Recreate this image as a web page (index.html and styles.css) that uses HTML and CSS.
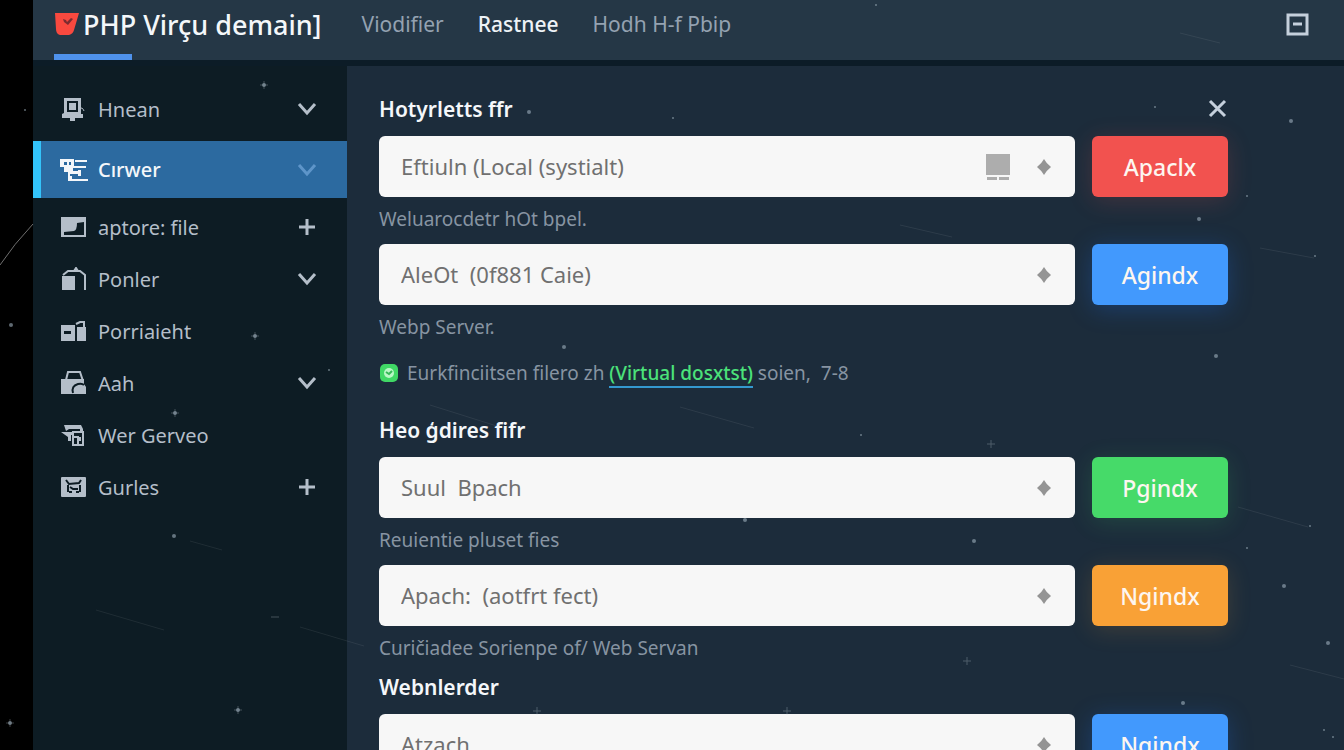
FILE: index.html
```html
<!DOCTYPE html>
<html lang="en">
<head>
    <meta charset="UTF-8">
    <meta name="viewport" content="width=device-width, initial-scale=1.0">
    <title>PHP Virçu demain</title>
    <link rel="stylesheet" href="styles.css">
</head>
<body>
    <div class="app">
        <header class="topbar">
            <a class="brand" href="#">
                <svg class="brand-logo" width="26" height="24" viewBox="0 0 26 24">
                    <path d="M1 1h24l-5 17q-1 4-5 5H6q-4-1-4-6z" fill="#f9493f"/>
                    <path d="M9 7l3 1 1 2 4-4 2 1-5 6-4-3z" fill="#7c2b30"/>
                </svg>
                <span>PHP Virçu demain]</span>
            </a>
            <nav class="topnav">
                <a href="#">Viodifier</a>
                <a href="#" class="current">Rastnee</a>
                <a href="#">Hodh H-f Pbip</a>
            </nav>
            <button type="button" class="icon-button" aria-label="Minimize">
                <svg width="24" height="24" viewBox="0 0 24 24">
                    <rect x="3" y="3" width="19" height="19" fill="none" stroke="#c5d0dc" stroke-width="3"/>
                    <path d="M8 12h9" stroke="#c5d0dc" stroke-width="3"/>
                </svg>
            </button>
        </header>

        <div class="body">
            <aside class="sidebar">
                <a href="#" class="item">
                    <svg class="item-icon" viewBox="0 0 28 24">
                        <path d="M4 1h17v16h2v4H2v-4l2-1z"/>
                        <path d="M10 20h5v4h-5z"/>
                        <path d="M8 5h9v9H8z" fill="none" stroke="#0d1c24" stroke-width="2"/>
                        <path d="M18 11q5-1 6 3" fill="none" stroke="#b4bec9" stroke-width="1"/>
                    </svg>
                    <span>Hnean</span>
                    <svg class="item-mark" viewBox="0 0 20 20"><path d="M2 5l8 9 8-9"/></svg>
                </a>
                <a href="#" class="item active">
                    <svg class="item-icon" viewBox="0 0 28 24">
                        <path d="M0 1h14v7h12v2H13v3h5v3h-6v5h16v2H8v-9H4V9H0z"/>
                        <path d="M15 2h12v2H15zM18 12h3v6h-3z"/>
                        <path d="M4 4h3v3H4zM9 4h2v3H9zM10 16h6v2h-6z" fill="#2c6aa0"/>
                    </svg>
                    <span>Cırwer</span>
                    <svg class="item-mark" viewBox="0 0 20 20"><path d="M2 5l8 9 8-9"/></svg>
                </a>
                <a href="#" class="item">
                    <svg class="item-icon" viewBox="0 0 28 24">
                        <path d="M1 2h25v20H1z"/>
                        <path d="M4 17l10-1q3-1 3-8l7-1v13H4z" fill="#0d1c24"/>
                    </svg>
                    <span>aptore: file</span>
                    <svg class="item-mark" viewBox="0 0 20 20"><path d="M10 2v16M2 10h16"/></svg>
                </a>
                <a href="#" class="item">
                    <svg class="item-icon" viewBox="0 0 28 24">
                        <path d="M2 9h13v14H2z"/>
                        <path d="M3 8l5-4h12l5 4v15M14 4l2-3 2 3" fill="none" stroke="#b4bec9" stroke-width="2"/>
                    </svg>
                    <span>Ponler</span>
                    <svg class="item-mark" viewBox="0 0 20 20"><path d="M2 5l8 9 8-9"/></svg>
                </a>
                <a href="#" class="item">
                    <svg class="item-icon" viewBox="0 0 28 24">
                        <path d="M1 6h14v16H1zM17 8h9v14h-9z"/>
                        <path d="M4 12h7v3H4z" fill="#0d1c24"/>
                        <path d="M16 5l4-2h4v5" fill="none" stroke="#b4bec9" stroke-width="2"/>
                    </svg>
                    <span>Porriaieht</span>
                </a>
                <a href="#" class="item">
                    <svg class="item-icon" viewBox="0 0 28 24">
                        <path d="M1 8h23v5l2 3v7H1z"/>
                        <path d="M6 9l2-8h12l3 9" fill="none" stroke="#b4bec9" stroke-width="2"/>
                        <path d="M13 22q-2-7 5-9 4-1 6 1" fill="none" stroke="#0d1c24" stroke-width="2"/>
                    </svg>
                    <span>Aah</span>
                    <svg class="item-mark" viewBox="0 0 20 20"><path d="M2 5l8 9 8-9"/></svg>
                </a>
                <a href="#" class="item">
                    <svg class="item-icon" viewBox="0 0 28 24">
                        <path d="M4 2h17l2 4v3h-3V6H9l-3 2zM1 9h13v3h-3v6H8v-4z"/>
                        <path d="M13 9h10v13H13zM13 14h5v8" fill="none" stroke="#b4bec9" stroke-width="2"/>
                        <path d="M19 14h2v4h-2z"/>
                    </svg>
                    <span>Wer Gerveo</span>
                </a>
                <a href="#" class="item">
                    <svg class="item-icon" viewBox="0 0 28 24">
                        <rect x="1" y="2" width="25" height="20" rx="1"/>
                        <path d="M6 5l3 4 10-1 2-3M8 10v7M20 10v7M10 12l3 2h5M9 17h3M16 17h3" fill="none" stroke="#0d1c24" stroke-width="2"/>
                    </svg>
                    <span>Gurles</span>
                    <svg class="item-mark" viewBox="0 0 20 20"><path d="M10 2v16M2 10h16"/></svg>
                </a>
            </aside>

            <main class="content">
                <section class="section">
                    <div class="section-head">
                        <h2>Hotyrletts ffr</h2>
                        <button type="button" class="icon-button" aria-label="Close">
                            <svg width="20" height="20" viewBox="0 0 20 20">
                                <path d="M2 2l15 15M17 2L2 17" stroke="#c5d0dc" stroke-width="3"/>
                            </svg>
                        </button>
                    </div>
                    <div class="row">
                        <div class="field">
                            <select id="local" aria-describedby="local-hint" aria-label="Local">
                                <option>Eftiuln (Local (systialt)</option>
                            </select>
                            <span class="field-icons">
                                <svg width="24" height="26" viewBox="0 0 24 26">
                                    <path d="M0 0h24v21H0zM1 23h10v3H1zM13 23h10v3H13z" fill="#adadad"/>
                                </svg>
                                <svg width="16" height="16" viewBox="0 0 16 16"><path d="M8 0q2 4 7 8-5 4-7 8-2-4-7-8 5-4 7-8z"/></svg>
                            </span>
                        </div>
                        <button type="button" class="action red">Apaclx</button>
                    </div>
                    <p class="hint" id="local-hint">Weluarocdetr hOt bpel.</p>
                    <div class="row">
                        <div class="field">
                            <select id="server" aria-describedby="server-hint" aria-label="Server">
                                <option>AleOt&nbsp; (0f881 Caie)</option>
                            </select>
                            <span class="field-icons">
                                <svg width="16" height="16" viewBox="0 0 16 16"><path d="M8 0q2 4 7 8-5 4-7 8-2-4-7-8 5-4 7-8z"/></svg>
                            </span>
                        </div>
                        <button type="button" class="action blue">Agindx</button>
                    </div>
                    <p class="hint" id="server-hint">Webp Server.</p>
                    <p class="status">
                        <svg width="20" height="20" viewBox="0 0 20 20">
                            <rect x="1" y="1" width="18" height="18" rx="5" fill="#40d865"/>
                            <circle cx="10" cy="10" r="5" fill="#b9f7c5"/>
                            <path d="M7 9l3 2 3-3" fill="none" stroke="#35b957" stroke-width="2"/>
                        </svg>
                        <span>Eurkfinciitsen filero zh <a href="#">(Virtual dosxtst)</a> soien,&nbsp; 7-8</span>
                    </p>
                </section>

                <section class="section">
                    <div class="section-head">
                        <h2>Heo ģdires fifr</h2>
                    </div>
                    <div class="row">
                        <div class="field">
                            <select id="bpach" aria-describedby="bpach-hint" aria-label="Bpach">
                                <option>Suul&nbsp; Bpach</option>
                            </select>
                            <span class="field-icons">
                                <svg width="16" height="16" viewBox="0 0 16 16"><path d="M8 0q2 4 7 8-5 4-7 8-2-4-7-8 5-4 7-8z"/></svg>
                            </span>
                        </div>
                        <button type="button" class="action green">Pgindx</button>
                    </div>
                    <p class="hint" id="bpach-hint">Reuientie pluset fies</p>
                    <div class="row">
                        <div class="field">
                            <select id="apach" aria-describedby="apach-hint" aria-label="Apach">
                                <option>Apach:&nbsp; (aotfrt fect)</option>
                            </select>
                            <span class="field-icons">
                                <svg width="16" height="16" viewBox="0 0 16 16"><path d="M8 0q2 4 7 8-5 4-7 8-2-4-7-8 5-4 7-8z"/></svg>
                            </span>
                        </div>
                        <button type="button" class="action orange">Ngindx</button>
                    </div>
                    <p class="hint" id="apach-hint">Curičiadee Sorienpe of/ Web Servan</p>
                </section>

                <section class="section">
                    <div class="section-head">
                        <h2>Webnlerder</h2>
                    </div>
                    <div class="row">
                        <div class="field">
                            <select id="web" aria-label="Webnlerder">
                                <option>Atzach</option>
                            </select>
                            <span class="field-icons">
                                <svg width="16" height="16" viewBox="0 0 16 16"><path d="M8 0q2 4 7 8-5 4-7 8-2-4-7-8 5-4 7-8z"/></svg>
                            </span>
                        </div>
                        <button type="button" class="action blue">Ngindx</button>
                    </div>
                </section>
            </main>
        </div>
    </div>

    <!-- starry background, drawn over the panels -->
    <svg class="stars" viewBox="0 0 1344 750" preserveAspectRatio="xMinYMin slice" aria-hidden="true">
        <path class="trail" d="M0 265Q14 244 33 224"/>
        <g class="streak">
            <path d="M96 610l68 20M300 627l64 19M190 541l32 9M900 225l52 12M430 405l70 22M680 407l74 21M1238 507l70 20M1260 248l54 10M1180 33l40 10M1290 665l54 14"/>
        </g>
        <g class="cross">
            <path d="M260 85h8M264 81v8M251 336h8M255 332v8M171 413h8M175 409v8M234 710h8M238 706v8M6 723h8M10 719v8M271 617h8M963 661h8M967 657v8M533 711h8M537 707v8M783 711h8M787 707v8M987 444h8M991 440v8"/>
        </g>
        <g class="dot">
            <circle cx="264" cy="85" r="2"/>
            <circle cx="255" cy="336" r="2"/>
            <circle cx="175" cy="413" r="2"/>
            <circle cx="238" cy="710" r="2"/>
            <circle cx="10" cy="723" r="2"/>
            <circle cx="11" cy="325" r="2"/>
            <circle cx="25" cy="110" r="1"/>
            <circle cx="174" cy="536" r="2"/>
            <circle cx="529" cy="112" r="2"/>
            <circle cx="673" cy="118" r="1"/>
            <circle cx="564" cy="347" r="2"/>
            <circle cx="745" cy="520" r="2"/>
            <circle cx="974" cy="541" r="2"/>
            <circle cx="1155" cy="107" r="1"/>
            <circle cx="1291" cy="121" r="2"/>
            <circle cx="1199" cy="219" r="2"/>
            <circle cx="1247" cy="196" r="1"/>
            <circle cx="1216" cy="356" r="2"/>
            <circle cx="1315" cy="256" r="1"/>
            <circle cx="861" cy="435" r="1"/>
            <circle cx="1310" cy="526" r="1"/>
            <circle cx="1247" cy="548" r="1"/>
            <circle cx="1284" cy="586" r="2"/>
            <circle cx="1328" cy="643" r="2"/>
            <circle cx="1183" cy="703" r="2"/>
            <circle cx="1324" cy="730" r="1"/>
            <circle cx="1333" cy="737" r="1"/>
            <circle cx="329" cy="370" r="1"/>
            <circle cx="876" cy="5" r="1"/>
        </g>
    </svg>
</body>
</html>
```

FILE: styles.css
```css
* {
    box-sizing: border-box;
}
body {
    margin: 0;
    padding: 0 0 0 33px;
    background-color: #000;
    font-family: "Noto Sans", "Open Sans", sans-serif;
    color: #b4bec9;
}
a {
    color: inherit;
    text-decoration: none;
}
.app {
    display: flex;
    flex-direction: column;
    height: 100vh;
    background-color: #1c2c3b;
}

/* Top bar */
.topbar {
    display: flex;
    align-items: stretch;
    height: 66px;
    flex-shrink: 0;
    padding: 0 35px 0 21px;
    background-color: #253746;
    border-bottom: 6px solid #0c1c27;
}
.brand {
    position: relative;
    display: flex;
    align-items: center;
    gap: 3px;
    padding-bottom: 12px;
    font-size: 27px;
    font-weight: 500;
    color: #f4f7fa;
    white-space: nowrap;
}
.brand::after {
    content: "";
    position: absolute;
    left: 0;
    bottom: 0;
    width: 78px;
    height: 6px;
    background-color: #4f92ec;
}
.topnav {
    display: flex;
    align-items: center;
    gap: 34px;
    margin-left: 40px;
    padding-bottom: 12px;
    font-size: 21px;
    color: #94a2b1;
    white-space: nowrap;
}
.topnav .current {
    color: #eef2f6;
    font-weight: 500;
}
.icon-button {
    display: flex;
    align-items: center;
    padding: 0;
    background: none;
    border: none;
    cursor: pointer;
}
.topbar .icon-button {
    margin-left: auto;
    padding-bottom: 12px;
}

/* Sidebar */
.body {
    display: flex;
    flex: 1;
    min-height: 0;
}
.sidebar {
    width: 314px;
    flex-shrink: 0;
    padding-top: 17px;
    background-color: #0d1c24;
}
.item {
    display: flex;
    align-items: center;
    height: 52px;
    padding: 0 30px 0 27px;
    font-size: 20px;
}
.item-icon {
    width: 28px;
    height: 24px;
    margin-right: 10px;
    fill: #b4bec9;
}
.item-mark {
    width: 20px;
    height: 20px;
    margin-left: auto;
    fill: none;
    stroke: #b4bec9;
    stroke-width: 3;
}
.item.active {
    height: 57px;
    margin: 6px 0 3px;
    padding-left: 19px;
    border-left: 8px solid #33c4fb;
    background-color: #2c6aa0;
    color: #f4f7fa;
    font-weight: 500;
}
.active .item-icon {
    fill: #f4f7fa;
}
.active .item-mark {
    stroke: #5e95c9;
}

/* Content */
.content {
    display: flex;
    flex-direction: column;
    gap: 10px;
    flex: 1;
    min-width: 0;
    padding: 27px 116px 27px 32px;
    overflow-y: auto;
    scrollbar-width: none;
}
.section-head {
    display: flex;
    align-items: center;
    justify-content: space-between;
    height: 32px;
    margin-bottom: 11px;
}
h2 {
    margin: 0;
    font-size: 21px;
    font-weight: 600;
    line-height: 32px;
    color: #f4f7fa;
}
.row {
    display: flex;
    gap: 17px;
}
.field {
    position: relative;
    flex: 1;
}
select {
    width: 100%;
    height: 61px;
    padding: 0 22px 2px;
    appearance: none;
    background-color: #f7f7f7;
    border: none;
    border-radius: 6px;
    font-family: inherit;
    font-size: 22px;
    color: #707070;
}
.field-icons {
    position: absolute;
    top: 0;
    right: 23px;
    display: flex;
    align-items: center;
    gap: 26px;
    height: 100%;
    fill: #949494;
    pointer-events: none;
}
.action {
    width: 136px;
    height: 61px;
    padding: 0;
    border: none;
    border-radius: 6px;
    font-family: inherit;
    font-size: 23px;
    font-weight: 500;
    color: #fdf6f0;
    cursor: pointer;
}
.red {
    background-color: #f2524f;
    box-shadow: 0 4px 24px rgba(242, 82, 79, 0.18);
}
.blue {
    background-color: #4299fd;
    box-shadow: 0 4px 24px rgba(30, 110, 240, 0.28);
}
.green {
    background-color: #46da69;
    box-shadow: 0 4px 24px rgba(70, 218, 105, 0.16);
}
.orange {
    background-color: #f9a136;
    box-shadow: 0 4px 24px rgba(249, 161, 54, 0.16);
}
.hint {
    margin: 9px 0 12px;
    font-size: 19px;
    line-height: 26px;
    color: #8794a2;
}
.section .hint:last-child {
    margin-bottom: 0;
}
.status {
    display: flex;
    align-items: center;
    gap: 8px;
    margin: 17px 0 15px;
    font-size: 19px;
    line-height: 32px;
    color: #8794a2;
}
.status a {
    border-bottom: 2px solid #3498cf;
    color: #4be27a;
    font-weight: 500;
}

/* Stars */
.stars {
    position: fixed;
    top: 0;
    left: 0;
    width: 100%;
    height: 100%;
    pointer-events: none;
}
.trail {
    fill: none;
    stroke: #6f6f6f;
    stroke-width: 1;
}
.streak {
    stroke: #fff;
    opacity: 0.07;
}
.cross {
    stroke: #c4ced6;
    opacity: 0.3;
}
.dot {
    fill: #9fb0bd;
    opacity: 0.6;
}
```
